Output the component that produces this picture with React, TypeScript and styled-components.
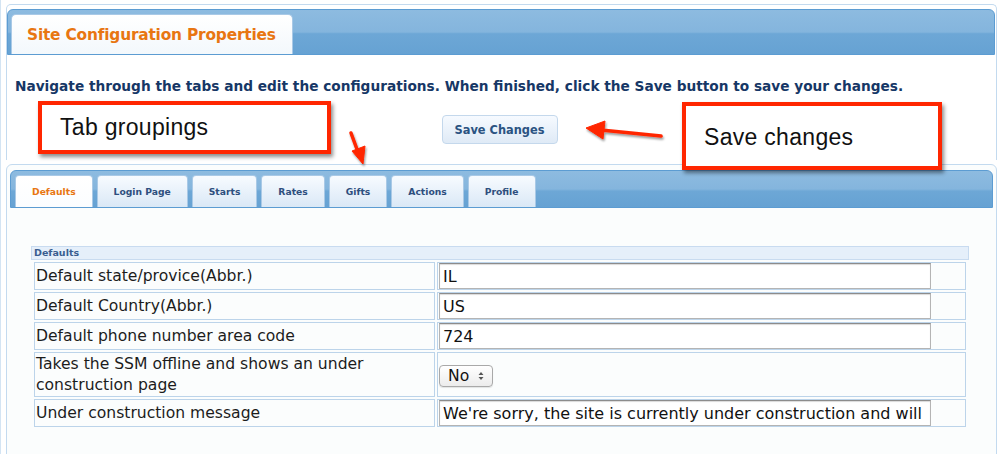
import styled, { createGlobalStyle } from 'styled-components'

const GlobalStyle = createGlobalStyle`
  html, body {
    margin: 0;
    padding: 0;
    background: #ffffff;
  }
  body {
    font-family: "DejaVu Sans", "Liberation Sans", sans-serif;
    width: 1000px;
    height: 454px;
    overflow: hidden;
  }
`

const Page = styled.div`
  position: relative;
  width: 1000px;
  height: 454px;
  box-sizing: border-box;
  padding: 4px 3px 0 5px;
  border-left: 1px solid #d3e4f3;
`

const TopPanel = styled.div`
  border: 1px solid #c3daef;
  border-bottom: none;
  border-radius: 5px 5px 0 0;
  background: #ffffff;
  padding: 4px 0 0 0;
  height: 156px;
  box-sizing: border-box;
`

const HeaderBar = styled.div`
  height: 46px;
  box-sizing: border-box;
  margin: 0 1px 0 0;
  border: 1px solid #5c9cd2;
  border-radius: 6px 6px 0 0;
  background: linear-gradient(#8dbbe0 0%, #84b5dd 50%, #6da7d6 54%, #66a2d3 100%);
  display: flex;
  align-items: flex-end;
  padding-left: 3px;
`

const HeaderTab = styled.div`
  height: 40px;
  box-sizing: border-box;
  padding: 0 16px 0 15px;
  display: flex;
  align-items: center;
  border-radius: 5px 5px 0 0;
  border: 1px solid #a9c9e6;
  border-bottom: none;
  background: linear-gradient(#ffffff, #f3f8fc);
  color: #e87612;
  font-weight: bold;
  font-size: 15.4px;
  letter-spacing: -0.2px;
`

const Intro = styled.p`
  margin: 23px 0 0 8px;
  font-size: 13.7px;
  font-weight: bold;
  color: #163766;
  line-height: 17px;
  white-space: nowrap;
`

const ActionRow = styled.div`
  display: flex;
  justify-content: center;
  margin-top: 20px;
  padding-right: 4px;
`

const SaveButton = styled.button`
  width: 116px;
  height: 29px;
  border: 1px solid #c4d8ec;
  border-radius: 4px;
  background: linear-gradient(#f6faff, #dfeaf6);
  color: #2b5382;
  font-family: "DejaVu Sans", sans-serif;
  font-weight: bold;
  font-size: 11.4px;
  cursor: pointer;
`

const TabPanel = styled.div`
  border: 1px solid #c3daef;
  border-radius: 6px 6px 0 0;
  background: #fbfdfd;
  height: 300px;
  padding: 5px 3px 0 3px;
  box-sizing: border-box;
  margin-top: 4px;
`

const TabBar = styled.div`
  height: 38px;
  box-sizing: border-box;
  border: 1px solid #5c9cd2;
  border-radius: 6px 6px 0 0;
  background: linear-gradient(#8dbbe0 0%, #84b5dd 50%, #6da7d6 56%, #66a2d3 100%);
  display: flex;
  align-items: flex-end;
  gap: 4px;
  padding-left: 4px;
`

const Tab = styled.div<{ $active?: boolean }>`
  height: 32px;
  box-sizing: border-box;
  padding: 0 16px;
  display: flex;
  align-items: center;
  justify-content: center;
  border: 1px solid #a9c9e6;
  border-bottom: none;
  border-radius: 4px 4px 0 0;
  background: ${(p) =>
    p.$active ? 'linear-gradient(#ffffff, #fbfdff)' : 'linear-gradient(#f7fbff, #dae8f6)'};
  color: ${(p) => (p.$active ? '#e87612' : '#2e4f7e')};
  font-size: 9.2px;
  font-weight: bold;
  cursor: pointer;
`

const Section = styled.div`
  margin: 38px 24px 0 21px;
`

const SectionTitle = styled.div`
  height: 14px;
  box-sizing: border-box;
  background: #e5effa;
  border: 1px solid #c8dbf0;
  color: #3a5e90;
  font-size: 9.5px;
  font-weight: bold;
  line-height: 12px;
  padding-left: 2px;
`

const Table = styled.table`
  border-collapse: separate;
  border-spacing: 2px;
  margin: 0 0 0 1px;
  width: 936px;
`

const LabelCell = styled.td`
  width: 401px;
  box-sizing: border-box;
  border: 1px solid #bcd4ea;
  padding: 1px 1px 0;
  font-size: 15.6px;
  color: #1c1c1c;
  line-height: 21px;
  vertical-align: middle;
`

const ValueCell = styled.td`
  border: 1px solid #bcd4ea;
  padding: 0 1px;
  height: 26px;
  vertical-align: middle;
`

const TextInput = styled.input`
  display: block;
  width: 492px;
  height: 26px;
  box-sizing: border-box;
  border: 1px solid #b4b4b4;
  border-top-color: #8c8c8c;
  box-shadow: inset 0 1px 1px rgba(0, 0, 0, 0.15);
  padding: 0 3px;
  font-family: "DejaVu Sans", sans-serif;
  font-size: 16px;
  color: #111;
  background: #fff;
  outline: none;
`

const SelectBox = styled.div`
  display: inline-flex;
  align-items: center;
  gap: 9px;
  width: 54px;
  height: 22px;
  box-sizing: border-box;
  margin: 3px 0 0;
  padding: 0 6px 0 8px;
  border: 1px solid #a9a9a9;
  border-radius: 4px;
  background: linear-gradient(#ffffff, #ececec);
  box-shadow: 0 1px 1px rgba(0, 0, 0, 0.1);
  font-size: 15.6px;
  color: #111;
  vertical-align: middle;
`

const Callout = styled.div<{ $x: number; $y: number; $w: number; $h: number; $drop?: number }>`
  position: absolute;
  left: ${(p) => p.$x}px;
  top: ${(p) => p.$y}px;
  width: ${(p) => p.$w}px;
  height: ${(p) => p.$h}px;
  box-sizing: border-box;
  border: 4px solid #ff2600;
  background: #ffffff;
  box-shadow: 2px 3px 4px rgba(0, 0, 0, 0.45);
  display: flex;
  align-items: center;
  padding: ${(p) => p.$drop ?? 0}px 0 0 18px;
  font-family: "Liberation Sans", Arial, sans-serif;
  font-size: 23px;
  letter-spacing: 0.3px;
  color: #111;
`

const Arrows = styled.svg`
  position: absolute;
  left: 0;
  top: 0;
  pointer-events: none;
`

const rows = [
  { label: 'Default state/provice(Abbr.)', value: 'IL' },
  { label: 'Default Country(Abbr.)', value: 'US' },
  { label: 'Default phone number area code', value: '724' },
]

const tabs = ['Defaults', 'Login Page', 'Starts', 'Rates', 'Gifts', 'Actions', 'Profile']

export default function App() {
  return (
    <>
      <GlobalStyle />
      <Page>
        <TopPanel>
          <HeaderBar>
            <HeaderTab>Site Configuration Properties</HeaderTab>
          </HeaderBar>
          <Intro>
            Navigate through the tabs and edit the configurations. When finished, click the Save
            button to save your changes.
          </Intro>
          <ActionRow>
            <SaveButton>Save Changes</SaveButton>
          </ActionRow>
        </TopPanel>

        <TabPanel>
          <TabBar>
            {tabs.map((t, i) => (
              <Tab key={t} $active={i === 0}>
                {t}
              </Tab>
            ))}
          </TabBar>
          <Section>
            <SectionTitle>Defaults</SectionTitle>
            <Table>
              <tbody>
                {rows.map((r) => (
                  <tr key={r.label}>
                    <LabelCell>{r.label}</LabelCell>
                    <ValueCell>
                      <TextInput defaultValue={r.value} />
                    </ValueCell>
                  </tr>
                ))}
                <tr>
                  <LabelCell>Takes the SSM offline and shows an under construction page</LabelCell>
                  <ValueCell>
                    <SelectBox>
                      No
                      <svg width="6" height="10" viewBox="0 0 6 10">
                        <path d="M0.5 4 L3 1 L5.5 4 Z M0.5 6 L3 9 L5.5 6 Z" fill="#555" />
                      </svg>
                    </SelectBox>
                  </ValueCell>
                </tr>
                <tr>
                  <LabelCell>Under construction message</LabelCell>
                  <ValueCell>
                    <TextInput defaultValue="We're sorry, the site is currently under construction and will be back shortly." />
                  </ValueCell>
                </tr>
              </tbody>
            </Table>
          </Section>
        </TabPanel>

        <Callout $x={37} $y={101} $w={293} $h={53}>
          Tab groupings
        </Callout>
        <Callout $x={681} $y={102} $w={260} $h={68} $drop={3}>
          Save changes
        </Callout>

        <Arrows width="1000" height="454" viewBox="0 0 1000 454">
          <defs>
            <filter id="sh" x="-20%" y="-20%" width="140%" height="140%">
              <feDropShadow dx="1" dy="2" stdDeviation="1.2" floodColor="#000" floodOpacity="0.4" />
            </filter>
          </defs>
          <g filter="url(#sh)" fill="#ff2600" stroke="#ff2600">
            <line x1="350" y1="133" x2="357" y2="152" strokeWidth="3.5" strokeLinecap="round" />
            <polygon points="351,151 364,146 362,164" strokeWidth="1" strokeLinejoin="round" />
            <line x1="660" y1="136" x2="600" y2="130" strokeWidth="3.5" strokeLinecap="round" />
            <polygon points="604,121 602,139 585,128" strokeWidth="1" strokeLinejoin="round" />
          </g>
        </Arrows>
      </Page>
    </>
  )
}
